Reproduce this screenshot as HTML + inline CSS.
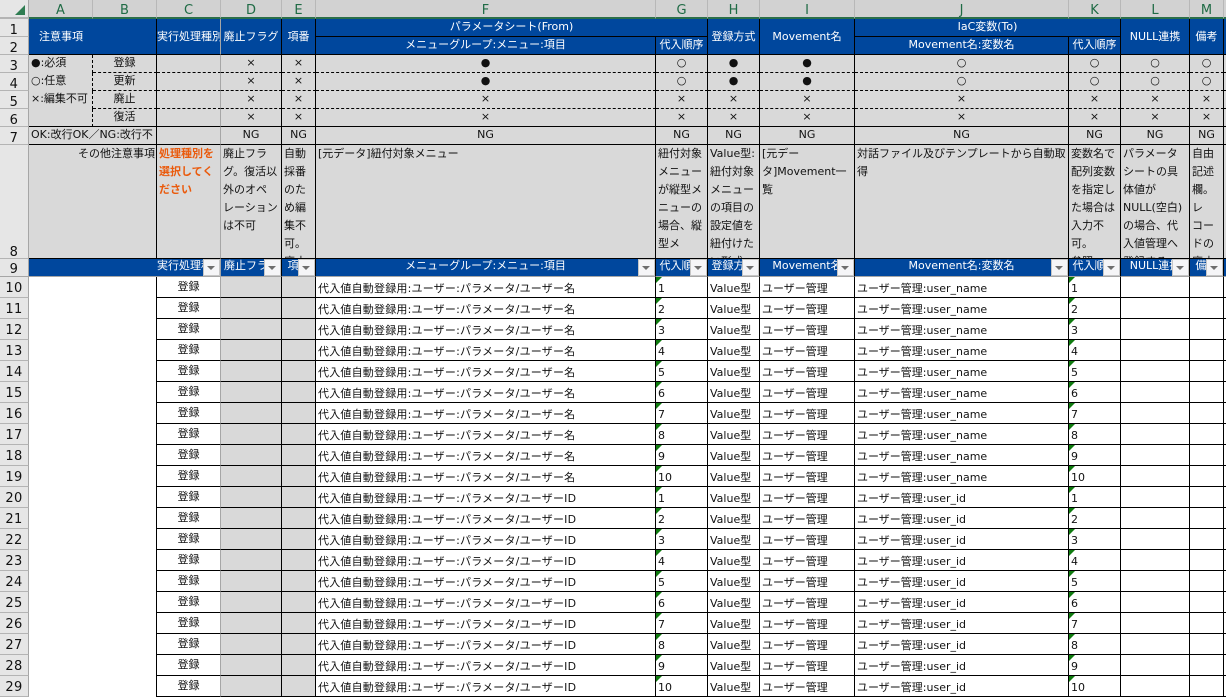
<!DOCTYPE html>
<html lang="ja"><head><meta charset="utf-8"><title>Sheet</title>
<style>
html,body{margin:0;padding:0;background:#fff;width:1226px;height:697px;overflow:hidden}
table{position:absolute;left:0;top:0;width:1226px;table-layout:fixed;border-collapse:separate;border-spacing:0;font:11px/14px "DejaVu Sans","Noto Sans CJK JP",sans-serif;color:#111}
td{box-sizing:border-box;padding:0;border-right:1px solid #000;border-bottom:1px solid #000;overflow:hidden;white-space:nowrap;text-align:center;vertical-align:middle;position:relative;height:18px;background:#d9d9d9}
tr.c td{height:19px;background:#d2d2d2;border-right:1px solid #b8b8b8;border-bottom:2px solid #2b6f4a;color:#1f6b45;font:13px/12px "DejaVu Sans",sans-serif;vertical-align:top;padding-top:5px}
td.n,tr.c td.n{background:#e6e6e6;border-right:1px solid #a6a6a6;border-bottom:1px solid #b4b4b4;color:#111;font:13px/11px "DejaVu Sans",sans-serif;letter-spacing:.4px;vertical-align:bottom}
tr.c td.n{border-bottom:2px solid #b4b4b4;padding-top:0}
tr.c td.x{border-right:0;background:#d2d2d2}
tr.u td:not(.n):not([rowspan]){padding-bottom:2px}
.b{background:#00479d;color:#fff}
.g{border-right-color:#a6a6a6}
.d{border-bottom:1px dashed #000}
.dl{border-right:1px dashed #000}
.nb{border-right:0}
.nl{border-bottom:0}
.l{text-align:left;padding-left:2px}
.e{border-right:0}
.t{vertical-align:top;text-align:left}
.t div{height:113px;overflow:hidden;line-height:18px;padding-left:2px;margin-top:0}
.o{color:#ea5a0c;font-weight:bold}
.w{background:#fff}
tr.z td{height:21px;vertical-align:top;padding-top:5px;line-height:14px;background:#fff}
tr.z td.n{background:#e6e6e6;padding-top:0;padding-bottom:3px;vertical-align:bottom;line-height:11px}
tr.z td.s{background:#d9d9d9}
tr.z td.r{padding-top:2px;line-height:15px;color:#111}
tr.z td.a{text-align:left;padding-left:2px}
tr.z td:nth-child(6){letter-spacing:.2px}
tr.z td.nb{border-right:1px solid #000}
tr.z td.e.nl{border-bottom:1px solid #000}
tr.z td.v::before{content:"";position:absolute;left:0;top:0;border-top:6px solid #0f7b0f;border-right:6px solid transparent}
tr.f td{border-bottom:1px solid #a6a6a6;line-height:14px;vertical-align:top;padding-top:0}
tr.f td.n{line-height:11px;vertical-align:bottom;padding-bottom:1px;border-bottom:1px solid #a6a6a6}
i{position:absolute;right:0;top:0;width:17px;height:17px;box-sizing:border-box;background:#f5f5f7;border:1px solid #c6c6c6;display:block}
i::after{content:"";position:absolute;left:3px;top:6px;border-top:4px solid #6e6e6e;border-left:4px solid transparent;border-right:4px solid transparent}
svg{position:absolute;left:15px;top:5px}
</style></head><body>
<table>
<colgroup><col style="width:29px"><col style="width:64px"><col style="width:64px"><col style="width:64px"><col style="width:61px"><col style="width:34px"><col style="width:340px"><col style="width:52px"><col style="width:52px"><col style="width:95px"><col style="width:214px"><col style="width:52px"><col style="width:69px"><col style="width:34px"><col style="width:2px"></colgroup>
<tr class="c"><td class="n"><svg width="10" height="10"><polygon points="10,0 10,10 0,10" fill="#2f7d52"/></svg></td><td>A</td><td>B</td><td>C</td><td>D</td><td>E</td><td>F</td><td>G</td><td>H</td><td>I</td><td>J</td><td>K</td><td>L</td><td>M</td><td class="x"></td></tr>
<tr class="u"><td class="n">1</td><td class="b l" colspan="2" rowspan="2" style="padding-left:10px">注意事項</td><td class="b g l" rowspan="2" style="padding-left:0">実行処理種別</td><td class="b" rowspan="2">廃止フラグ</td><td class="b" rowspan="2">項番</td><td class="b" colspan="2">パラメータシート(From)</td><td class="b" rowspan="2">登録方式</td><td class="b" rowspan="2">Movement名</td><td class="b" colspan="2">IaC変数(To)</td><td class="b" rowspan="2">NULL連携</td><td class="b" rowspan="2">備考</td><td class="b e" rowspan="2"></td></tr>
<tr class="u"><td class="n">2</td><td class="b">メニューグループ:メニュー:項目</td><td class="b">代入順序</td><td class="b">Movement名:変数名</td><td class="b">代入順序</td></tr>
<tr class="u"><td class="n">3</td><td class="l dl nl">●:必須</td><td class="d">登録</td><td class="d g"></td><td class="d">×</td><td class="d">×</td><td class="d">●</td><td class="d">○</td><td class="d">●</td><td class="d">●</td><td class="d">○</td><td class="d">○</td><td class="d">○</td><td class="d">○</td><td class="e d"></td></tr>
<tr class="u"><td class="n">4</td><td class="l dl nl">○:任意</td><td class="d">更新</td><td class="d g"></td><td class="d">×</td><td class="d">×</td><td class="d">●</td><td class="d">○</td><td class="d">●</td><td class="d">●</td><td class="d">○</td><td class="d">○</td><td class="d">○</td><td class="d">○</td><td class="e d"></td></tr>
<tr class="u"><td class="n">5</td><td class="l dl nl">×:編集不可</td><td class="d">廃止</td><td class="d g"></td><td class="d">×</td><td class="d">×</td><td class="d">×</td><td class="d">×</td><td class="d">×</td><td class="d">×</td><td class="d">×</td><td class="d">×</td><td class="d">×</td><td class="d">×</td><td class="e d"></td></tr>
<tr class="u"><td class="n">6</td><td class="dl"></td><td>復活</td><td class="g"></td><td>×</td><td>×</td><td>×</td><td>×</td><td>×</td><td>×</td><td>×</td><td>×</td><td>×</td><td>×</td><td class="e"></td></tr>
<tr class="u"><td class="n">7</td><td class="l" colspan="2">OK:改行OK／NG:改行不</td><td class="g"></td><td>NG</td><td>NG</td><td>NG</td><td>NG</td><td>NG</td><td>NG</td><td>NG</td><td>NG</td><td>NG</td><td>NG</td><td class="e"></td></tr>
<tr><td class="n" style="height:114px">8</td><td class="t" colspan="2" style="text-align:right"><div style="padding:0 1px 0 0">その他注意事項</div></td><td class="t g o"><div>処理種別を<br>選択してく<br>ださい</div></td><td class="t"><div>廃止フラ<br>グ。復活以<br>外のオペ<br>レーション<br>は不可</div></td><td class="t"><div>自動<br>採番<br>のた<br>め編<br>集不<br>可。<br>廃止</div></td><td class="t"><div>[元データ]紐付対象メニュー</div></td><td class="t"><div>紐付対象<br>メニュー<br>が縦型メ<br>ニューの<br>場合、縦<br>型メ<br>ニュー</div></td><td class="t"><div>Value型:<br>紐付対象<br>メニュー<br>の項目の<br>設定値を<br>紐付けた<br>い形式</div></td><td class="t"><div>[元デー<br>タ]Movement一<br>覧</div></td><td class="t"><div>対話ファイル及びテンプレートから自動取<br>得</div></td><td class="t"><div>変数名で<br>配列変数<br>を指定し<br>た場合は<br>入力不<br>可。<br>参照</div></td><td class="t"><div>パラメータ<br>シートの具<br>体値が<br>NULL(空白)<br>の場合、代<br>入値管理へ<br>登録する</div></td><td class="t"><div>自由<br>記述<br>欄。<br>レ<br>コー<br>ドの<br>廃止</div></td><td class="e"></td></tr>
<tr class="f"><td class="n">9</td><td class="b nb" colspan="2"></td><td class="b g l" style="padding-left:0">実行処理種別<i></i></td><td class="b l" style="padding-left:3px">廃止フラグ<i></i></td><td class="b">項番<i></i></td><td class="b">メニューグループ:メニュー:項目<i></i></td><td class="b">代入順序<i></i></td><td class="b">登録方式<i></i></td><td class="b">Movement名<i></i></td><td class="b">Movement名:変数名<i></i></td><td class="b">代入順序<i></i></td><td class="b">NULL連携<i></i></td><td class="b">備考<i></i></td><td class="b e"></td></tr>
<tr class="z"><td class="n">10</td><td class="nb nl" colspan="2"></td><td class="r g">登録</td><td class="s"></td><td class="s"></td><td class="a">代入値自動登録用:ユーザー:パラメータ/ユーザー名</td><td class="a v">1</td><td class="a">Value型</td><td class="a">ユーザー管理</td><td class="a">ユーザー管理:user_name</td><td class="a v">1</td><td></td><td></td><td class="e nl"></td></tr>
<tr class="z"><td class="n">11</td><td class="nb nl" colspan="2"></td><td class="r g">登録</td><td class="s"></td><td class="s"></td><td class="a">代入値自動登録用:ユーザー:パラメータ/ユーザー名</td><td class="a v">2</td><td class="a">Value型</td><td class="a">ユーザー管理</td><td class="a">ユーザー管理:user_name</td><td class="a v">2</td><td></td><td></td><td class="e nl"></td></tr>
<tr class="z"><td class="n">12</td><td class="nb nl" colspan="2"></td><td class="r g">登録</td><td class="s"></td><td class="s"></td><td class="a">代入値自動登録用:ユーザー:パラメータ/ユーザー名</td><td class="a v">3</td><td class="a">Value型</td><td class="a">ユーザー管理</td><td class="a">ユーザー管理:user_name</td><td class="a v">3</td><td></td><td></td><td class="e nl"></td></tr>
<tr class="z"><td class="n">13</td><td class="nb nl" colspan="2"></td><td class="r g">登録</td><td class="s"></td><td class="s"></td><td class="a">代入値自動登録用:ユーザー:パラメータ/ユーザー名</td><td class="a v">4</td><td class="a">Value型</td><td class="a">ユーザー管理</td><td class="a">ユーザー管理:user_name</td><td class="a v">4</td><td></td><td></td><td class="e nl"></td></tr>
<tr class="z"><td class="n">14</td><td class="nb nl" colspan="2"></td><td class="r g">登録</td><td class="s"></td><td class="s"></td><td class="a">代入値自動登録用:ユーザー:パラメータ/ユーザー名</td><td class="a v">5</td><td class="a">Value型</td><td class="a">ユーザー管理</td><td class="a">ユーザー管理:user_name</td><td class="a v">5</td><td></td><td></td><td class="e nl"></td></tr>
<tr class="z"><td class="n">15</td><td class="nb nl" colspan="2"></td><td class="r g">登録</td><td class="s"></td><td class="s"></td><td class="a">代入値自動登録用:ユーザー:パラメータ/ユーザー名</td><td class="a v">6</td><td class="a">Value型</td><td class="a">ユーザー管理</td><td class="a">ユーザー管理:user_name</td><td class="a v">6</td><td></td><td></td><td class="e nl"></td></tr>
<tr class="z"><td class="n">16</td><td class="nb nl" colspan="2"></td><td class="r g">登録</td><td class="s"></td><td class="s"></td><td class="a">代入値自動登録用:ユーザー:パラメータ/ユーザー名</td><td class="a v">7</td><td class="a">Value型</td><td class="a">ユーザー管理</td><td class="a">ユーザー管理:user_name</td><td class="a v">7</td><td></td><td></td><td class="e nl"></td></tr>
<tr class="z"><td class="n">17</td><td class="nb nl" colspan="2"></td><td class="r g">登録</td><td class="s"></td><td class="s"></td><td class="a">代入値自動登録用:ユーザー:パラメータ/ユーザー名</td><td class="a v">8</td><td class="a">Value型</td><td class="a">ユーザー管理</td><td class="a">ユーザー管理:user_name</td><td class="a v">8</td><td></td><td></td><td class="e nl"></td></tr>
<tr class="z"><td class="n">18</td><td class="nb nl" colspan="2"></td><td class="r g">登録</td><td class="s"></td><td class="s"></td><td class="a">代入値自動登録用:ユーザー:パラメータ/ユーザー名</td><td class="a v">9</td><td class="a">Value型</td><td class="a">ユーザー管理</td><td class="a">ユーザー管理:user_name</td><td class="a v">9</td><td></td><td></td><td class="e nl"></td></tr>
<tr class="z"><td class="n">19</td><td class="nb nl" colspan="2"></td><td class="r g">登録</td><td class="s"></td><td class="s"></td><td class="a">代入値自動登録用:ユーザー:パラメータ/ユーザー名</td><td class="a v">10</td><td class="a">Value型</td><td class="a">ユーザー管理</td><td class="a">ユーザー管理:user_name</td><td class="a v">10</td><td></td><td></td><td class="e nl"></td></tr>
<tr class="z"><td class="n">20</td><td class="nb nl" colspan="2"></td><td class="r g">登録</td><td class="s"></td><td class="s"></td><td class="a">代入値自動登録用:ユーザー:パラメータ/ユーザーID</td><td class="a v">1</td><td class="a">Value型</td><td class="a">ユーザー管理</td><td class="a">ユーザー管理:user_id</td><td class="a v">1</td><td></td><td></td><td class="e nl"></td></tr>
<tr class="z"><td class="n">21</td><td class="nb nl" colspan="2"></td><td class="r g">登録</td><td class="s"></td><td class="s"></td><td class="a">代入値自動登録用:ユーザー:パラメータ/ユーザーID</td><td class="a v">2</td><td class="a">Value型</td><td class="a">ユーザー管理</td><td class="a">ユーザー管理:user_id</td><td class="a v">2</td><td></td><td></td><td class="e nl"></td></tr>
<tr class="z"><td class="n">22</td><td class="nb nl" colspan="2"></td><td class="r g">登録</td><td class="s"></td><td class="s"></td><td class="a">代入値自動登録用:ユーザー:パラメータ/ユーザーID</td><td class="a v">3</td><td class="a">Value型</td><td class="a">ユーザー管理</td><td class="a">ユーザー管理:user_id</td><td class="a v">3</td><td></td><td></td><td class="e nl"></td></tr>
<tr class="z"><td class="n">23</td><td class="nb nl" colspan="2"></td><td class="r g">登録</td><td class="s"></td><td class="s"></td><td class="a">代入値自動登録用:ユーザー:パラメータ/ユーザーID</td><td class="a v">4</td><td class="a">Value型</td><td class="a">ユーザー管理</td><td class="a">ユーザー管理:user_id</td><td class="a v">4</td><td></td><td></td><td class="e nl"></td></tr>
<tr class="z"><td class="n">24</td><td class="nb nl" colspan="2"></td><td class="r g">登録</td><td class="s"></td><td class="s"></td><td class="a">代入値自動登録用:ユーザー:パラメータ/ユーザーID</td><td class="a v">5</td><td class="a">Value型</td><td class="a">ユーザー管理</td><td class="a">ユーザー管理:user_id</td><td class="a v">5</td><td></td><td></td><td class="e nl"></td></tr>
<tr class="z"><td class="n">25</td><td class="nb nl" colspan="2"></td><td class="r g">登録</td><td class="s"></td><td class="s"></td><td class="a">代入値自動登録用:ユーザー:パラメータ/ユーザーID</td><td class="a v">6</td><td class="a">Value型</td><td class="a">ユーザー管理</td><td class="a">ユーザー管理:user_id</td><td class="a v">6</td><td></td><td></td><td class="e nl"></td></tr>
<tr class="z"><td class="n">26</td><td class="nb nl" colspan="2"></td><td class="r g">登録</td><td class="s"></td><td class="s"></td><td class="a">代入値自動登録用:ユーザー:パラメータ/ユーザーID</td><td class="a v">7</td><td class="a">Value型</td><td class="a">ユーザー管理</td><td class="a">ユーザー管理:user_id</td><td class="a v">7</td><td></td><td></td><td class="e nl"></td></tr>
<tr class="z"><td class="n">27</td><td class="nb nl" colspan="2"></td><td class="r g">登録</td><td class="s"></td><td class="s"></td><td class="a">代入値自動登録用:ユーザー:パラメータ/ユーザーID</td><td class="a v">8</td><td class="a">Value型</td><td class="a">ユーザー管理</td><td class="a">ユーザー管理:user_id</td><td class="a v">8</td><td></td><td></td><td class="e nl"></td></tr>
<tr class="z"><td class="n">28</td><td class="nb nl" colspan="2"></td><td class="r g">登録</td><td class="s"></td><td class="s"></td><td class="a">代入値自動登録用:ユーザー:パラメータ/ユーザーID</td><td class="a v">9</td><td class="a">Value型</td><td class="a">ユーザー管理</td><td class="a">ユーザー管理:user_id</td><td class="a v">9</td><td></td><td></td><td class="e nl"></td></tr>
<tr class="z"><td class="n">29</td><td class="nb nl" colspan="2"></td><td class="r g">登録</td><td class="s"></td><td class="s"></td><td class="a">代入値自動登録用:ユーザー:パラメータ/ユーザーID</td><td class="a v">10</td><td class="a">Value型</td><td class="a">ユーザー管理</td><td class="a">ユーザー管理:user_id</td><td class="a v">10</td><td></td><td></td><td class="e nl"></td></tr>
</table>
</body></html>
